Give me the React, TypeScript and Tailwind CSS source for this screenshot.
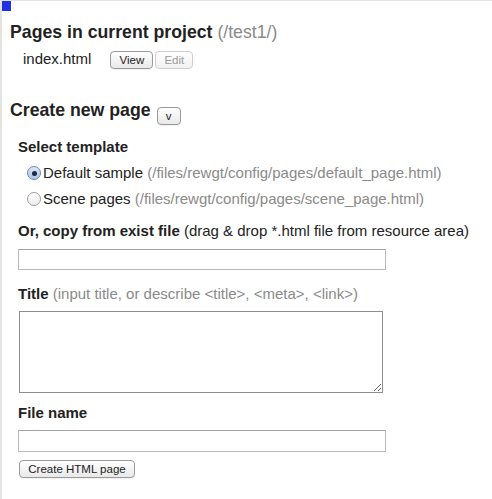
import React from "react";

const btn =
  "h-[18px] rounded-[4px] border border-[#9a9a9a] bg-gradient-to-b from-white to-[#e9e9e9] px-[8px] text-[11.5px] leading-[16px] text-[#222] shadow-[0_1px_0_rgba(0,0,0,0.05)]";

const Radio = ({ checked }: { checked?: boolean }) => (
  <span
    className={
      "flex h-[14px] w-[14px] shrink-0 items-center justify-center rounded-full border " +
      (checked
        ? "border-[#6f86a8] bg-gradient-to-b from-[#dbe8f7] to-[#a9c6ea]"
        : "border-[#9d9d9d] bg-gradient-to-b from-white to-[#ececec]")
    }
  >
    {checked && <span className="h-[5px] w-[5px] rounded-full bg-[#1d2a3f]" />}
  </span>
);

const App = () => {
  return (
    <div className="relative h-[499px] w-[492px] overflow-hidden border-l-2 border-t border-[#e4e4e4] bg-white font-['Liberation_Sans',Arial,sans-serif] text-[#222]">
      <div className="absolute left-[-1px] top-0 h-[10px] w-[10px] bg-[#2130e6]" />

      {/* pages in project */}
      <div className="ml-[8px] mt-[21px] text-[17.7px] font-bold leading-[21px]">
        Pages in current project{" "}
        <span className="font-normal text-[#8a8a8a]">(/test1/)</span>
      </div>
      <div className="ml-[21px] mt-[8px] flex items-start">
        <span className="text-[15px] leading-[16px]">index.html</span>
        <button className={btn + " ml-[19px] w-[43px] px-0"}>View</button>
        <button className="ml-[2px] h-[18px] w-[38px] rounded-[4px] border border-[#cfcfcf] bg-gradient-to-b from-white to-[#f1f1f1] text-[11.5px] leading-[16px] text-[#9a9a9a]">
          Edit
        </button>
      </div>

      {/* create new page */}
      <div className="ml-[8px] mt-[31px] flex items-start">
        <span className="text-[17.7px] font-bold leading-[21px]">Create new page</span>
        <button className={btn + " ml-[6px] mt-[7px] h-[16px] w-[24px] px-0 text-[10px] leading-[13px]"}>
          v
        </button>
      </div>

      <div className="ml-[16px] mt-[13px] text-[15px] font-bold leading-[18px]">Select template</div>

      <div className="ml-[25px] mt-[9px] flex h-[16px] items-center gap-[2px] text-[15px] leading-[16px]">
        <Radio checked />
        <span>
          Default sample{" "}
          <span className="text-[#8a8a8a]">(/files/rewgt/config/pages/default_page.html)</span>
        </span>
      </div>
      <div className="ml-[25px] mt-[10px] flex h-[16px] items-center gap-[2px] text-[15px] leading-[16px]">
        <Radio />
        <span>
          Scene pages{" "}
          <span className="text-[#8a8a8a]">(/files/rewgt/config/pages/scene_page.html)</span>
        </span>
      </div>

      <div className="ml-[16px] mt-[15px] text-[15px] leading-[18px]">
        <span className="font-bold">Or, copy from exist file</span> (drag &amp; drop *.html file from
        resource area)
      </div>
      <input className="ml-[16px] mt-[9px] block h-[21px] w-[368px] border border-[#b9b9b9] border-t-[#a4a4a4] outline-none" />

      <div className="ml-[16px] mt-[15px] text-[15px] leading-[18px]">
        <span className="font-bold">Title</span>{" "}
        <span className="text-[#8a8a8a]">(input title, or describe &lt;title&gt;, &lt;meta&gt;, &lt;link&gt;)</span>
      </div>
      <textarea className="ml-[17px] mt-[8px] block h-[82px] w-[364px] border border-[#8e8e8e] outline-none" />

      <div className="ml-[16px] mt-[11px] text-[15px] font-bold leading-[18px]">File name</div>
      <input className="ml-[16px] mt-[8px] block h-[22px] w-[368px] border border-[#b9b9b9] border-t-[#a4a4a4] outline-none" />

      <button className={btn + " ml-[17px] mt-[8px] block w-[116px] px-0"}>Create HTML page</button>
    </div>
  );
};

export default App;
